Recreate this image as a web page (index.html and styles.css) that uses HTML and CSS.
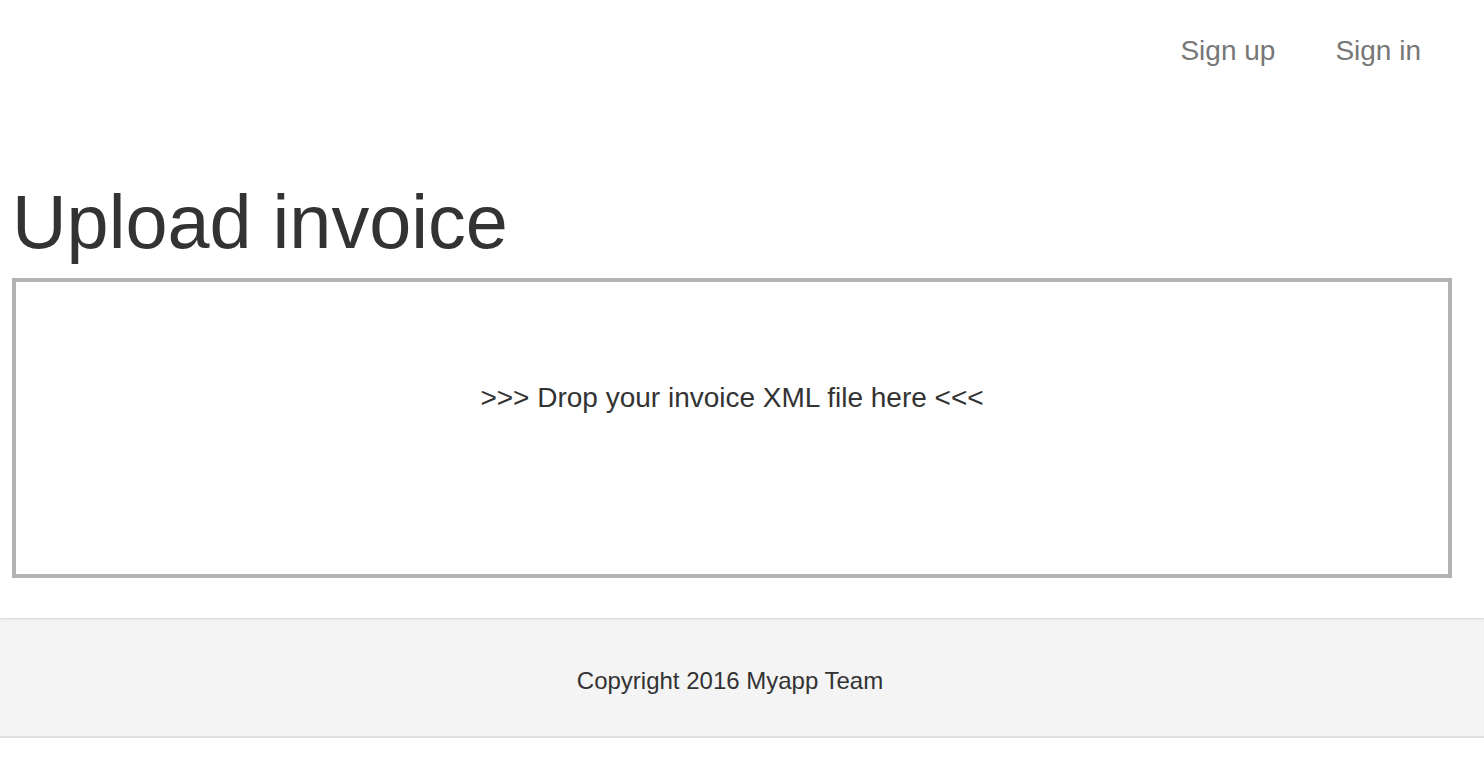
FILE: index.html
```html
<!DOCTYPE html>
<html lang="en">
<head>
<meta charset="utf-8">
<title>Upload invoice</title>
<link rel="stylesheet" href="styles.css">
</head>
<body>
<nav class="navbar">
  <a class="nav-link" href="#">Sign up</a>
  <a class="nav-link" href="#">Sign in</a>
</nav>
<main class="main">
  <h1 class="title">Upload invoice</h1>
  <div class="dropzone">&gt;&gt;&gt; Drop your invoice XML file here &lt;&lt;&lt;</div>
</main>
<footer class="footer">Copyright 2016 Myapp Team</footer>
</body>
</html>
```

FILE: styles.css
```css
html, body {
  margin: 0;
  padding: 0;
  background: #fff;
}
body {
  font-family: "Liberation Sans", Arial, Helvetica, sans-serif;
  font-size: 28px;
  line-height: 40px;
  color: #333;
}
.navbar {
  height: 100px;
  display: flex;
  justify-content: flex-end;
  padding-right: 33px;
  box-sizing: border-box;
}
.nav-link {
  display: block;
  padding: 31px 30px 29px;
  line-height: 40px;
  color: #777;
  text-decoration: none;
}
.main {
  padding: 38px 0 0 12px;
}
.title {
  margin: 40px 0 12px;
  font-size: 75.6px;
  font-weight: 400;
  line-height: 88px;
  color: #333;
}
.dropzone {
  width: 1440px;
  height: 300px;
  box-sizing: border-box;
  border: 4px solid #b3b3b3;
  padding-top: 96px;
  text-align: center;
  color: #333;
}
.footer {
  margin-top: 40px;
  height: 120px;
  box-sizing: border-box;
  background: #f4f4f4;
  border-top: 1px solid #dcdcdc;
  border-bottom: 2px solid #e0e0e0;
  box-shadow: inset 0 2px 2px rgba(0,0,0,0.03);
  padding-top: 45px;
  padding-right: 24px;
  font-size: 24px;
  line-height: 34px;
  text-align: center;
  color: #333;
}
```
